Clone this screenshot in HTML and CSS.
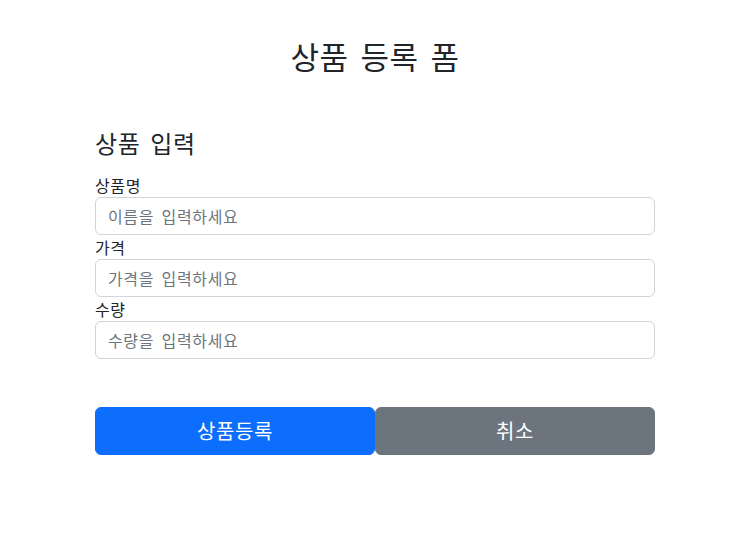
FILE: index.html
```html
<!DOCTYPE html>
<html lang="ko">
<head>
  <meta charset="UTF-8">
  <meta name="viewport" content="width=device-width, initial-scale=1.0">
  <title>상품 등록 폼</title>
  <link rel="stylesheet" href="styles.css">
</head>
<body>
  <div class="container">
    <div class="header">
      <h2>상품 등록 폼</h2>
    </div>

    <h4>상품 입력</h4>
    <form id="item-form">
      <div class="field">
        <label for="itemName">상품명</label>
        <input type="text" id="itemName" class="form-control" placeholder="이름을 입력하세요">
      </div>
      <div class="field">
        <label for="price">가격</label>
        <input type="text" id="price" class="form-control" placeholder="가격을 입력하세요">
      </div>
      <div class="field">
        <label for="quantity">수량</label>
        <input type="text" id="quantity" class="form-control" placeholder="수량을 입력하세요">
      </div>

      <div class="actions">
        <button type="submit" class="btn btn-primary">상품등록</button>
        <button type="button" class="btn btn-secondary">취소</button>
      </div>
    </form>
  </div>
</body>
</html>
```

FILE: styles.css
```css
body {
  margin: 0;
  padding-left: 6px;
  font-family: "Noto Sans CJK KR", "Noto Sans", sans-serif;
  font-size: 16px;
  line-height: 1.5;
  letter-spacing: 0.04em;
  word-spacing: 0.15em;
  color: #212529;
  background-color: #fff;
}

.container {
  max-width: 560px;
  margin: 0 auto;
}

.header {
  padding: 37px 0 55px;
  text-align: center;
}

h2 {
  margin: 0;
  font-size: 31px;
  font-weight: 400;
  line-height: 1.2;
}

h4 {
  margin: 0 0 15px;
  font-size: 24px;
  font-weight: 400;
  line-height: 1.2;
}

label {
  display: block;
}

.form-control {
  display: block;
  width: 100%;
  box-sizing: border-box;
  padding: 6px 12px;
  font-family: inherit;
  font-size: 16px;
  line-height: 1.5;
  letter-spacing: inherit;
  word-spacing: inherit;
  color: #212529;
  border: 1px solid #ced4da;
  border-radius: 6px;
}

.form-control::placeholder {
  color: #6c757d;
}

.actions {
  display: flex;
  margin-top: 48px;
}

.btn {
  flex: 1;
  padding: 8px 16px;
  font-family: inherit;
  font-size: 20px;
  line-height: 1.5;
  letter-spacing: inherit;
  color: #fff;
  border: 1px solid transparent;
  border-radius: 6px;
  cursor: pointer;
}

.btn-primary {
  background-color: #0d6efd;
  border-color: #0d6efd;
}

.btn-secondary {
  background-color: #6c757d;
  border-color: #6c757d;
}
```
